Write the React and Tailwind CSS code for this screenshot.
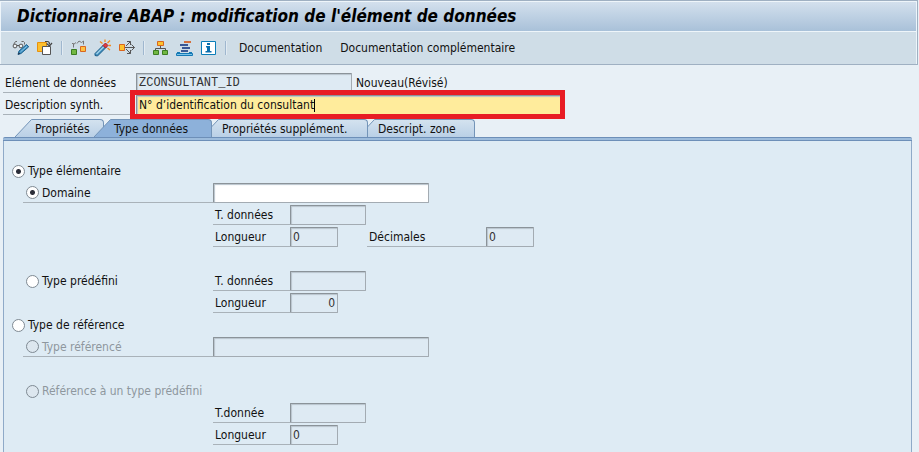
import React, { useState } from "react";

const svgProps = {
  width: 18,
  height: 18,
  viewBox: "0 0 18 18",
  fill: "none",
  "aria-hidden": true,
};

function DisplayChangeIcon() {
  return (
    <svg {...svgProps}>
      <path d="M1.500 5.500 3.500 2.500H5M12.500 5.500V3.500l-1-1H9.500" stroke="#6a6a6a" />
      <circle cx="3" cy="7" r="1.900" fill="#eef3f6" stroke="#555" />
      <circle cx="9" cy="7" r="1.900" fill="#eef3f6" stroke="#555" />
      <path d="M5 6.500h2" stroke="#555" />
      <path d="m6 15.500 1-3.500 7.500-6.500 2.200 2.300L9 14.500Z" fill="#3d8fc2" stroke="#1d628e" />
      <path d="m8.500 12.800 6.500-5.600" stroke="#8cc6e6" />
      <path d="m6 15.500.8-2 1.300 1.300Z" fill="#223" />
    </svg>
  );
}

function OtherObjectIcon() {
  return (
    <svg {...svgProps}>
      <path d="M1.500 3.500h9v9h-9z" fill="#fdbf2d" stroke="#e8920c" />
      <path d="M6.500 7.500h8v8h-8z" fill="#fff" stroke="#555" />
      <path d="M9 2.500h2.500c1.500 0 2 1 2 3" stroke="#444" strokeWidth="1.200" />
      <path d="M10.500 4.500 13.500 7l2.500-3" stroke="#444" strokeWidth="1.200" />
    </svg>
  );
}

function CheckIcon() {
  return (
    <svg {...svgProps}>
      <path d="M3.500 8.500v-4H2M3.500 5.500 6 3.500M7 4.500l2-2.500 2.500 1.500L13.500 2v3.500" stroke="#777" />
      <path d="M1.500 10.500h5v5h-5z" fill="#72b843" stroke="#3c7d22" />
      <path d="M10.500 7.500h5v5h-5z" fill="#fdc041" stroke="#d9661f" />
    </svg>
  );
}

function ActivateIcon() {
  return (
    <svg {...svgProps}>
      <path d="m1 14.500 8.500-8.500 2.500 2.500L3.500 17 1 16.500Z" fill="#3f8dbb" stroke="#1d5f8b" />
      <path d="m2.500 15 7.500-7.500" stroke="#a4d3ea" strokeWidth="1.300" />
      <path d="m9 6.500 2.500-2.500 2.500 2.500L11.500 9Z" fill="#e23c3c" stroke="#a02030" />
      <path d="m6 2.500 2.500 2M11 .5v2.500M16 1.500l-2.500 2.500M14.500 6.500H17M13.500 9l2.500 2" stroke="#f28a1e" strokeWidth="1.300" />
    </svg>
  );
}

function WhereUsedIcon() {
  return (
    <svg {...svgProps}>
      <path d="M7 8.500h9.500M8 7l4.500-4.500M8 10l4.500 4.500" stroke="#555" />
      <path d="M9 2.500h3.500V6M9 14.500h3.500V11M13.500 5.500l3 3-3 3" stroke="#555" />
      <path d="M1.500 5.500h5v6h-5z" fill="#fdc32f" stroke="#d9661f" />
    </svg>
  );
}

function HierarchyIcon() {
  return (
    <svg {...svgProps}>
      <path d="M8.500 7v2.500M3.500 11V9.500h10V11" stroke="#555" />
      <path d="M5.500 2.500h6v4h-6z" fill="#fdc32f" stroke="#d9661f" />
      <path d="M1.500 11.500h5v4h-5zM10.500 11.500h5v4h-5z" fill="#72b843" stroke="#3c7d22" />
    </svg>
  );
}

function ObjectListIcon() {
  return (
    <svg {...svgProps}>
      <path d="M8 3h7" stroke="#d4703d" strokeWidth="2" />
      <path d="M4 6h8M6 9h8M5 12h7" stroke="#3a5895" strokeWidth="2" />
      <path d="M1 13.500h3M13 13.500h3" stroke="#1579b5" />
      <path d="M.5 14.500h16v2H.5z" fill="#7cc4e8" stroke="#1579b5" />
    </svg>
  );
}

function InfoIcon() {
  return (
    <svg {...svgProps}>
      <path d="M1.500 2.500h14v13h-14z" fill="#fff" stroke="#0b7db8" />
      <path d="M7 4h3v2H7zM6 7h4v5h1.500v1.500H5.500V12H7V8.500H6z" fill="#0b6fae" />
    </svg>
  );
}

function IconButton({ label, children }) {
  return (
    <button type="button" aria-label={label} className="flex h-6 w-6 items-center justify-center">
      {children}
    </button>
  );
}

function Separator() {
  return <span className="mx-1 h-3.5 w-0.5 border-r border-l border-r-[#e2ebf2] border-l-[#9fb7cf]" />;
}

const boxStyle =
  "h-5 rounded-[1px] border border-[#a3abb2] border-t-[#8b9399] border-l-[#8b9399] px-0.5 shadow-[inset_1px_1px_1px_#b9c4cc] outline-none";

function ReadOnlyBox({ label, value = "", size, align = "" }) {
  return (
    <input
      type="text"
      aria-label={label}
      readOnly
      value={value}
      className={`${boxStyle} bg-[#deeaf3] text-[#333] ${size} ${align}`}
    />
  );
}

function LabelCell({ children, className }) {
  return (
    <div className={`flex h-5 shrink-0 items-center border-b border-[#a9b2b9] ${className}`}>
      {children}
    </div>
  );
}

function Row({ children, className = "" }) {
  return <div className={`flex h-[22px] items-center ${className}`}>{children}</div>;
}

function Radio({ name, label, checked, onChange, disabled = false }) {
  return (
    <label className={`flex items-center gap-[3px] ${disabled ? "text-[#8e979e]" : ""}`}>
      <input
        type="radio"
        name={name}
        checked={checked}
        onChange={onChange}
        disabled={disabled}
        className="h-[13px] w-[13px] appearance-none rounded-full border border-[#7f8a93] bg-white checked:bg-[radial-gradient(circle,#2c2f3a_0_2px,#fff_3px)] disabled:bg-[#dde7ef]"
      />
      {label}
    </label>
  );
}

function Field({ label, value, size, align, labelWidth = "w-[77px]" }) {
  return (
    <>
      <LabelCell className={`pl-0.5 ${labelWidth}`}>{label}</LabelCell>
      <ReadOnlyBox label={label} value={value} size={size} align={align} />
    </>
  );
}

const tabs = [
  { label: "Propriétés", width: "w-[89px]", layer: "z-0" },
  { label: "Type données", width: "w-[118px]", layer: "z-30" },
  { label: "Propriétés supplément.", width: "w-[166px]", layer: "z-20" },
  { label: "Descript. zone", width: "w-[117px]", layer: "z-10" },
];

function Tab({ tab, active, onSelect }) {
  return (
    <button
      type="button"
      role="tab"
      aria-selected={active}
      onClick={onSelect}
      className={`relative -mr-2.5 h-[18px] text-left ${tab.width} ${tab.layer}`}
    >
      <span className="absolute inset-0 flex">
        <svg width="18" height="18" viewBox="0 0 18 18" aria-hidden="true" className="shrink-0">
          <defs>
            <linearGradient id="tabSlant" x1="0" y1="0" x2="0" y2="1">
              <stop offset="0" stopColor="#d3e2ef" />
              <stop offset="1" stopColor="#bad0e6" />
            </linearGradient>
          </defs>
          <path d="M18 0 16 1 0 18h18Z" fill={active ? "#8db1da" : "url(#tabSlant)"} />
          <path d="M18 .5h-1.500L0 18" fill="none" stroke="#7394b8" />
        </svg>
        <span
          className={`grow rounded-tr-sm border-t border-r border-[#7394b8] ${
            active ? "bg-[#8db1da]" : "bg-linear-to-b from-[#d3e2ef] to-[#bad0e6]"
          }`}
        />
      </span>
      <span className="relative flex h-full items-center pt-0.5 pl-5 whitespace-nowrap">{tab.label}</span>
    </button>
  );
}

export default function App() {
  const [activeTab, setActiveTab] = useState(1);
  const [kind, setKind] = useState("elementary");
  const [source, setSource] = useState("domain");
  const [domain, setDomain] = useState("");
  const [description, setDescription] = useState("N° d’identification du consultant");

  return (
    <div className="flex min-h-screen flex-col overflow-hidden bg-[#e8f0f6] pr-px font-['DejaVu_Sans_Condensed','DejaVu_Sans',sans-serif] text-[12px] leading-4 text-[#111]">
      <header className="border-t border-r border-b border-[#9fb0c2]">
        <div className="border-t border-r border-l border-[#eef5fa]">
          <h1 className="flex h-[30px] items-center border-b border-[#eef5fa] bg-linear-to-b from-[#d3e0ed] to-[#a9c1d9] pb-0.5 pl-4 text-[17px] leading-5 font-bold text-black italic">
            Dictionnaire ABAP : modification de l'élément de données
          </h1>
          <div role="toolbar" className="flex h-8 items-center bg-[#cfdde7] pl-2">
            <IconButton label="Afficher / modifier"><DisplayChangeIcon /></IconButton>
            <IconButton label="Autre objet"><OtherObjectIcon /></IconButton>
            <Separator />
            <IconButton label="Contrôler"><CheckIcon /></IconButton>
            <IconButton label="Activer"><ActivateIcon /></IconButton>
            <IconButton label="Cas d'emploi"><WhereUsedIcon /></IconButton>
            <Separator />
            <IconButton label="Hiérarchie"><HierarchyIcon /></IconButton>
            <IconButton label="Liste d'objets"><ObjectListIcon /></IconButton>
            <IconButton label="Aide"><InfoIcon /></IconButton>
            <Separator />
            <button type="button" className="ml-2">Documentation</button>
            <button type="button" className="ml-[18px]">Documentation complémentaire</button>
          </div>
        </div>
      </header>

      <main className="flex grow flex-col pt-[7px] pr-1.5 pl-[3px]">
        <Row>
          <LabelCell className="w-[133px] pl-0.5">Elément de données</LabelCell>
          <input
            type="text"
            aria-label="Elément de données"
            readOnly
            value="ZCONSULTANT_ID"
            className={`${boxStyle} w-[216px] bg-[#deeaf3] font-['Liberation_Mono',monospace] text-[12px] text-[#333]`}
          />
          <span className="pl-1">Nouveau(Révisé)</span>
        </Row>
        <Row>
          <LabelCell className="w-[133px] pl-0.5">
            <label htmlFor="description">Description synth.</label>
          </LabelCell>
          <div className={`${boxStyle} relative flex w-[425px] items-center bg-[#ffec9c]`}>
            <input
              id="description"
              type="text"
              value={description}
              onChange={(e) => setDescription(e.target.value)}
              className="[field-sizing:content] bg-transparent outline-none"
            />
            <span className="h-[13px] w-px bg-black" />
            <span className="pointer-events-none absolute -top-1.5 -right-[5px] -bottom-[5px] -left-[7px] z-40 border-[5px] border-[#e81c24]" />
          </div>
        </Row>

        <div role="tablist" className="mt-[3px] flex pl-3">
          {tabs.map((tab, i) => (
            <Tab key={tab.label} tab={tab} active={i === activeTab} onSelect={() => setActiveTab(i)} />
          ))}
        </div>
        <div className="h-1 rounded-t-xs border-y border-[#6d8fb8] bg-[#9dbcdc]" />

        <section role="tabpanel" className="grow border-x border-[#8faac8] bg-[#deebf4] pt-[19px] pl-2">
          <Row>
            <Radio name="kind" label="Type élémentaire" checked={kind === "elementary"} onChange={() => setKind("elementary")} />
          </Row>
          <Row className="pl-[11px]">
            <LabelCell className="w-[190px] pl-[3px]">
              <Radio name="source" label="Domaine" checked={source === "domain"} onChange={() => setSource("domain")} />
            </LabelCell>
            <input
              type="text"
              aria-label="Domaine"
              value={domain}
              onChange={(e) => setDomain(e.target.value)}
              className={`${boxStyle} w-[216px] bg-white`}
            />
          </Row>
          <Row className="pl-[201px]">
            <Field label="T. données" size="w-[76px]" />
          </Row>
          <Row className="pl-[201px]">
            <Field label="Longueur" value="0" size="w-12" />
            <span className="w-[29px]" />
            <Field label="Décimales" value="0" size="w-12" labelWidth="w-[119px]" />
          </Row>
          <Row />
          <Row className="pl-3.5">
            <div className="w-[187px]">
              <Radio name="source" label="Type prédéfini" checked={source === "builtin"} onChange={() => setSource("builtin")} />
            </div>
            <Field label="T. données" size="w-[76px]" />
          </Row>
          <Row className="pl-[201px]">
            <Field label="Longueur" value="0" size="w-12" align="text-right" />
          </Row>
          <Row>
            <Radio name="kind" label="Type de référence" checked={kind === "reference"} onChange={() => setKind("reference")} />
          </Row>
          <Row className="pl-[11px]">
            <LabelCell className="w-[190px] pl-[3px]">
              <Radio name="reference" label="Type référencé" checked={false} disabled />
            </LabelCell>
            <ReadOnlyBox label="Type référencé" size="w-[216px]" />
          </Row>
          <Row />
          <Row className="pl-3.5">
            <Radio name="reference" label="Référence à un type prédéfini" checked={false} disabled />
          </Row>
          <Row className="pl-[201px]">
            <Field label="T.donnée" size="w-[76px]" />
          </Row>
          <Row className="pl-[201px]">
            <Field label="Longueur" value="0" size="w-12" />
          </Row>
        </section>
      </main>
    </div>
  );
}
